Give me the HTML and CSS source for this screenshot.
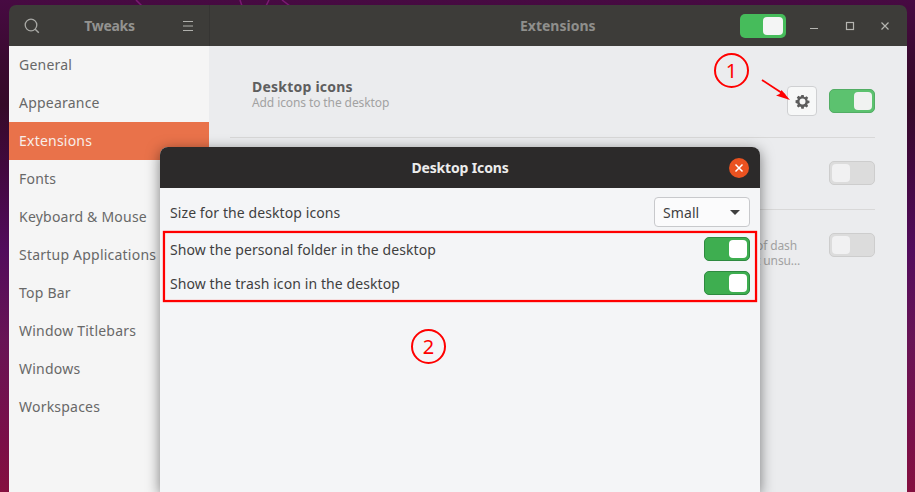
FILE: index.html
```html
<!DOCTYPE html>
<html lang="en">
<head>
<meta charset="utf-8">
<title>Tweaks - Extensions</title>
<link rel="stylesheet" href="styles.css">
</head>
<body>
<svg class="wallpaper-lines" width="915" height="6" viewBox="0 0 915 6"><path d="M136 0l6 6M240 0l2 6M266 6l3-6M282 0l8 6" stroke="#7a1a72" stroke-width="1.500" fill="none"/></svg>
<main class="window">
  <header class="titlebar">
    <div class="tb-left">
      <svg class="tb-icon" width="18" height="18" viewBox="0 0 18 18"><circle cx="8" cy="8" r="5.800" fill="none" stroke="#a9a9a5" stroke-width="1.300"/><path d="M12.200 12.200l3.600 3.600" stroke="#a9a9a5" stroke-width="1.500" fill="none"/></svg>
      <span class="tb-app">Tweaks</span>
      <svg class="tb-icon" width="12" height="10" viewBox="0 0 12 10"><path d="M1 .5h10M1 5h10M1 9.500h10" stroke="#b0b0ac" stroke-width="1" fill="none"/></svg>
    </div>
    <div class="tb-right">
      <span class="tb-title">Extensions</span>
      <span class="switch on-bright"><i></i></span>
      <div class="wm">
        <svg width="10" height="10" viewBox="0 0 10 10"><path d="M1 7.500h8" stroke="#b5b5b1" stroke-width="1.200"/></svg>
        <svg width="10" height="10" viewBox="0 0 10 10"><rect x="1.500" y="1.500" width="7" height="7" fill="none" stroke="#b5b5b1" stroke-width="1.200"/></svg>
        <svg width="10" height="10" viewBox="0 0 10 10"><path d="M1.500 1.500l7 7M8.500 1.500l-7 7" stroke="#b5b5b1" stroke-width="1.200"/></svg>
      </div>
    </div>
  </header>
  <div class="body">
    <nav class="sidebar">
      <a>General</a><a>Appearance</a><a class="active">Extensions</a><a>Fonts</a><a>Keyboard &amp; Mouse</a><a>Startup Applications</a><a>Top Bar</a><a>Window Titlebars</a><a>Windows</a><a>Workspaces</a>
    </nav>
    <section class="content">
      <div class="ext first">
        <div class="ext-text"><b>Desktop icons</b><small>Add icons to the desktop</small></div>
        <button class="gear" aria-label="Settings">
          <svg width="15" height="15" viewBox="0 0 16 16"><path fill="#5d5d5d" fill-rule="evenodd" d="M6.700 1h2.600l.3 1.900 1.100.5 1.600-1.100 1.800 1.800-1.100 1.600.5 1.100 1.900.3v2.600l-1.900.3-.5 1.100 1.100 1.600-1.800 1.800-1.600-1.100-1.100.5-.3 1.900H6.700l-.3-1.900-1.100-.5-1.600 1.100-1.800-1.800 1.100-1.600-.5-1.100-1.900-.3V6.700l1.900-.3.5-1.100-1.100-1.600 1.800-1.800 1.600 1.100 1.100-.5zM8 4.800a3.200 3.200 0 1 0 0 6.400 3.200 3.200 0 0 0 0-6.400z"/></svg>
        </button>
        <span class="switch on-soft"><i></i></span>
      </div>
      <div class="ext"><span class="switch off"><i></i></span></div>
      <div class="ext third">
        <small class="hidden-text">of dash<br>t unsu…</small>
        <span class="switch off"><i></i></span>
      </div>
    </section>
  </div>
</main>

<section class="dialog">
  <header class="dlg-head">
    <span>Desktop Icons</span>
    <span class="dlg-close"><svg width="10" height="10" viewBox="0 0 10 10"><path d="M1.500 1.500l7 7M8.500 1.500l-7 7" stroke="#fff" stroke-width="1.500"/></svg></span>
  </header>
  <div class="dlg-body">
    <div class="row"><span>Size for the desktop icons</span>
      <span class="select">Small<i></i></span></div>
    <div class="row"><span>Show the personal folder in the desktop</span><span class="switch on-dark"><i></i></span></div>
    <div class="row"><span>Show the trash icon in the desktop</span><span class="switch on-dark"><i></i></span></div>
  </div>
</section>

<div class="note note-one">1</div>
<svg class="arrow" width="34" height="30" viewBox="0 0 34 30"><path d="M1 1L24 16" stroke="#f00" stroke-width="1.800" fill="none"/><path d="M29 21L15 16.500l3.500-1.500 2-4z" fill="#f00"/></svg>
<div class="highlight"></div>
<div class="note note-two">2</div>
</body>
</html>
```
FILE: styles.css
```css
* { box-sizing: border-box; }
html, body { height: 100%; }
body {
  margin: 0;
  overflow: hidden;
  position: relative;
  padding: 5px 8px 0 9px;
  font-family: "Noto Sans", "Open Sans", sans-serif;
  background: linear-gradient(180deg, #470a42 0, #3a0a30 60px, #350a28 105px, #42083f 170px, #520c5c 250px, #681455 340px, #7a0f48 440px, #85103f 492px);
}
.wallpaper-lines { position: absolute; left: 0; top: 0; }
.window {
  position: relative;
  height: 487px;
  border-radius: 7px 7px 0 0;
  overflow: hidden;
  display: flex;
  flex-direction: column;
}
.titlebar { height: 41px; display: flex; background: #3d3c39; flex: none; }
.tb-left {
  width: 201px; display: flex; align-items: center; justify-content: space-between;
  padding: 0 15px 0 14px; border-right: 1px solid #363533;
}
.tb-icon { display: block; }
.tb-app { font-size: 14px; font-weight: 700; color: #939390; letter-spacing: -.3px; margin-right: 4px; }
.tb-right { flex: 1; display: flex; align-items: center; position: relative; justify-content: flex-end; }
.tb-title {
  position: absolute; left: 310px; font-size: 14px; font-weight: 700; color: #8f8f8c;
}
.wm { width: 121px; display: flex; align-items: center; justify-content: space-between; padding: 0 17px 0 23px; }
.wm svg { display: block; }
.body { flex: 1; display: flex; min-height: 0; }
.sidebar { width: 200px; background: #f5f5f5; flex: none; }
.sidebar a {
  display: block; height: 38px; line-height: 38px; padding-left: 10px;
  font-size: 14px; letter-spacing: .22px; color: #686868;
}
.sidebar a.active { background: #e9724a; color: #f8eee9; }
.content { flex: 1; background: #ebecee; padding: 0 32px 0 21px; }
.ext {
  height: 72px; display: flex; align-items: center; justify-content: flex-end;
  border-top: 1px solid #d8d8d8; padding-bottom: 1px;
}
.ext.first { height: 91px; border-top: 0; padding: 19px 0 0 22px; }
.ext.third { position: relative; }
.ext-text { flex: 1; display: flex; flex-direction: column; margin-bottom: 13px; }
.ext-text b { font-size: 14px; line-height: 16px; letter-spacing: .22px; color: #5e5e5e; }
.ext-text small, .hidden-text { font-size: 12px; line-height: 15px; letter-spacing: -.1px; color: #a2a2a2; }
.hidden-text { position: absolute; left: 526px; top: 28px; }
.gear {
  width: 30px; height: 30px; padding: 0; margin-right: 12px; display: flex; align-items: center; justify-content: center;
  background: #f7f8f8; border: 1px solid #cfd0d2; border-radius: 4px;
}
.switch {
  display: flex; justify-content: flex-end; width: 46px; height: 24px; padding: 2px 2px;
  border-radius: 5px; flex: none; border: 1px solid transparent;
}
.switch i { display: block; width: 18px; height: 18px; border-radius: 4px; background: #fff; }
.on-bright { background: #46bc5b; }
.on-bright i { width: 20px; background: #f4f5f5; }
.on-soft { background: #5cc26f; border-color: #52ad64; }
.on-soft i { background: #f0f2f1; }
.on-dark { background: #3eae50; border-color: #2e8a40; }
.off { background: #dcdcdc; border-color: #cdcdcd; justify-content: flex-start; }
.off i { background: #f1f1f2; }
.dialog {
  position: absolute; left: 160px; top: 147px; width: 600px; height: 345px;
  background: #f4f5f7; border-radius: 8px 8px 0 0;
  box-shadow: 0 3px 14px rgba(0,0,0,.5);
}
.dlg-head {
  height: 41px; background: #2c2a2a; border-radius: 8px 8px 0 0;
  display: flex; align-items: center; justify-content: center; position: relative;
  color: #ececec; font-size: 14px; font-weight: 700; letter-spacing: -.15px;
}
.dlg-close {
  position: absolute; right: 11px; top: 11px; width: 20px; height: 20px; border-radius: 50%;
  background: #ea5220; display: flex; align-items: center; justify-content: center;
}
.dlg-close svg { display: block; }
.dlg-body { padding: 9px 10px 0; }
.row {
  display: flex; align-items: center; justify-content: space-between;
  height: 30px; margin-bottom: 4px; font-size: 14px; letter-spacing: .09px; color: #3f3f3f;
}
.row:first-child { margin-bottom: 7px; }
.select {
  width: 96px; height: 30px; border: 1px solid #c8c9cc; border-radius: 4px; background: #fbfbfc;
  display: flex; align-items: center; justify-content: space-between; padding: 0 9px 0 8px;
}
.select i { width: 0; height: 0; border: 5px solid transparent; border-top: 5px solid #3f3f3f; border-bottom: 0; }
.note {
  position: absolute; width: 35px; height: 35px; border: 2px solid #f00; border-radius: 50%;
  color: #f00; font-size: 20px; line-height: 31px; text-align: center;
}
.note-one { left: 714px; top: 53px; }
.note-two { left: 411px; top: 329px; }
.arrow { position: absolute; left: 761px; top: 79px; }
.highlight {
  position: absolute; left: 163px; top: 231px; width: 594px; height: 71px;
  border: 2px solid #f00; box-shadow: 0 0 1px #f00, inset 0 0 1px #f00;
}
```
